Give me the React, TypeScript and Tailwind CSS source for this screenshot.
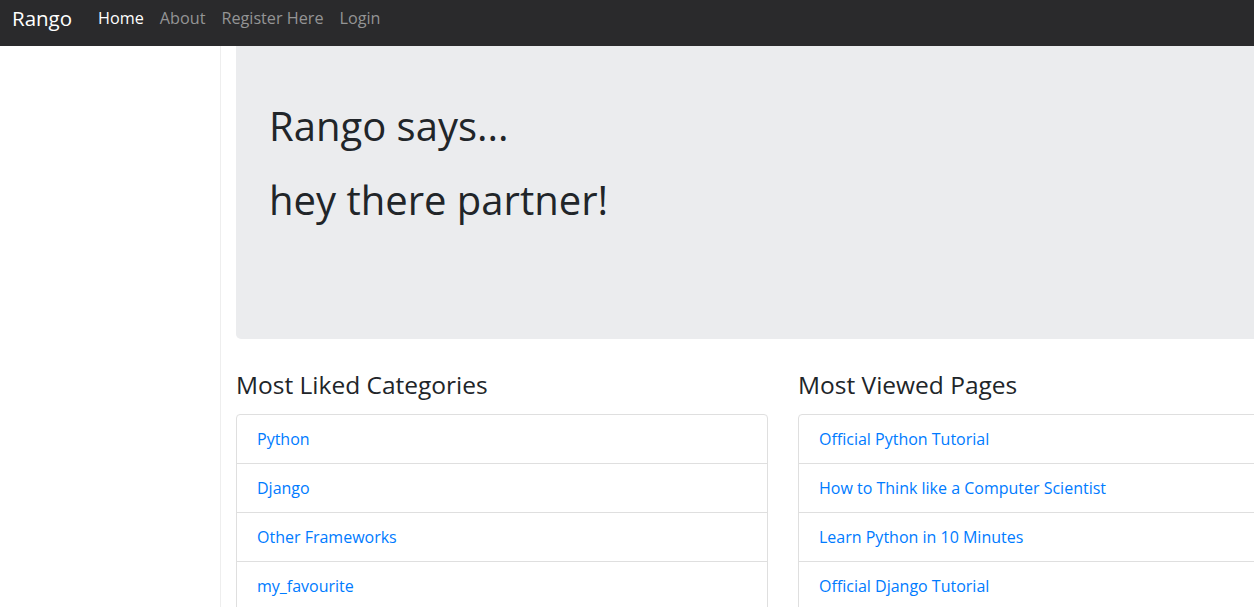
const categories = ['Python', 'Django', 'Other Frameworks', 'my_favourite'];
const pages = [
  'Official Python Tutorial',
  'How to Think like a Computer Scientist',
  'Learn Python in 10 Minutes',
  'Official Django Tutorial',
];

function ListBlock({ title, items }: { title: string; items: string[] }) {
  return (
    <div className="w-[532px] shrink-0">
      <h2 className="text-[24.5px] leading-[29px] text-[#212529] mt-[31px] mb-[15px]">{title}</h2>
      <div className="border border-[#dfdfdf] rounded-t-[4px]">
        {items.map((it, i) => (
          <div
            key={it}
            className={`flex items-center px-[20px] ${i > 0 ? 'h-[49px] border-t border-[#dfdfdf]' : 'h-[48px]'}`}
          >
            <a href="#" className="text-[16px] text-[#007bff]">{it}</a>
          </div>
        ))}
      </div>
    </div>
  );
}

export default function App() {
  return (
    <div
      className="w-[1254px] h-[607px] overflow-hidden bg-white"
      style={{ fontFamily: '"Open Sans", "Noto Sans", sans-serif' }}
    >
      <nav className="h-[46px] bg-[#2a2a2c] flex items-start pt-[4px] px-[12px]">
        <span className="text-[20.5px] leading-[28px] text-white mr-[18px]">Rango</span>
        <div className="flex items-center text-[16.2px] leading-[28px]">
          <a href="#" className="px-[8px] text-white">Home</a>
          <a href="#" className="px-[8px] text-[#949495]">About</a>
          <a href="#" className="px-[8px] text-[#949495]">Register Here</a>
          <a href="#" className="px-[8px] text-[#949495]">Login</a>
        </div>
      </nav>
      <div className="flex h-[561px]">
        <aside className="w-[221px] shrink-0 border-r border-[#eeeeee]" />
        <main className="pl-[15px] w-[1110px] shrink-0">
          <div className="bg-[#ebecee] rounded-b-[5px] h-[293px] px-[33px] pt-[56px]">
            <h1 className="text-[40px] leading-[48px] text-[#212529] mb-[26px]">Rango says...</h1>
            <h1 className="text-[40px] leading-[48px] text-[#212529]">hey there partner!</h1>
          </div>
          <div className="flex gap-[30px]">
            <ListBlock title="Most Liked Categories" items={categories} />
            <ListBlock title="Most Viewed Pages" items={pages} />
          </div>
        </main>
      </div>
    </div>
  );
}
